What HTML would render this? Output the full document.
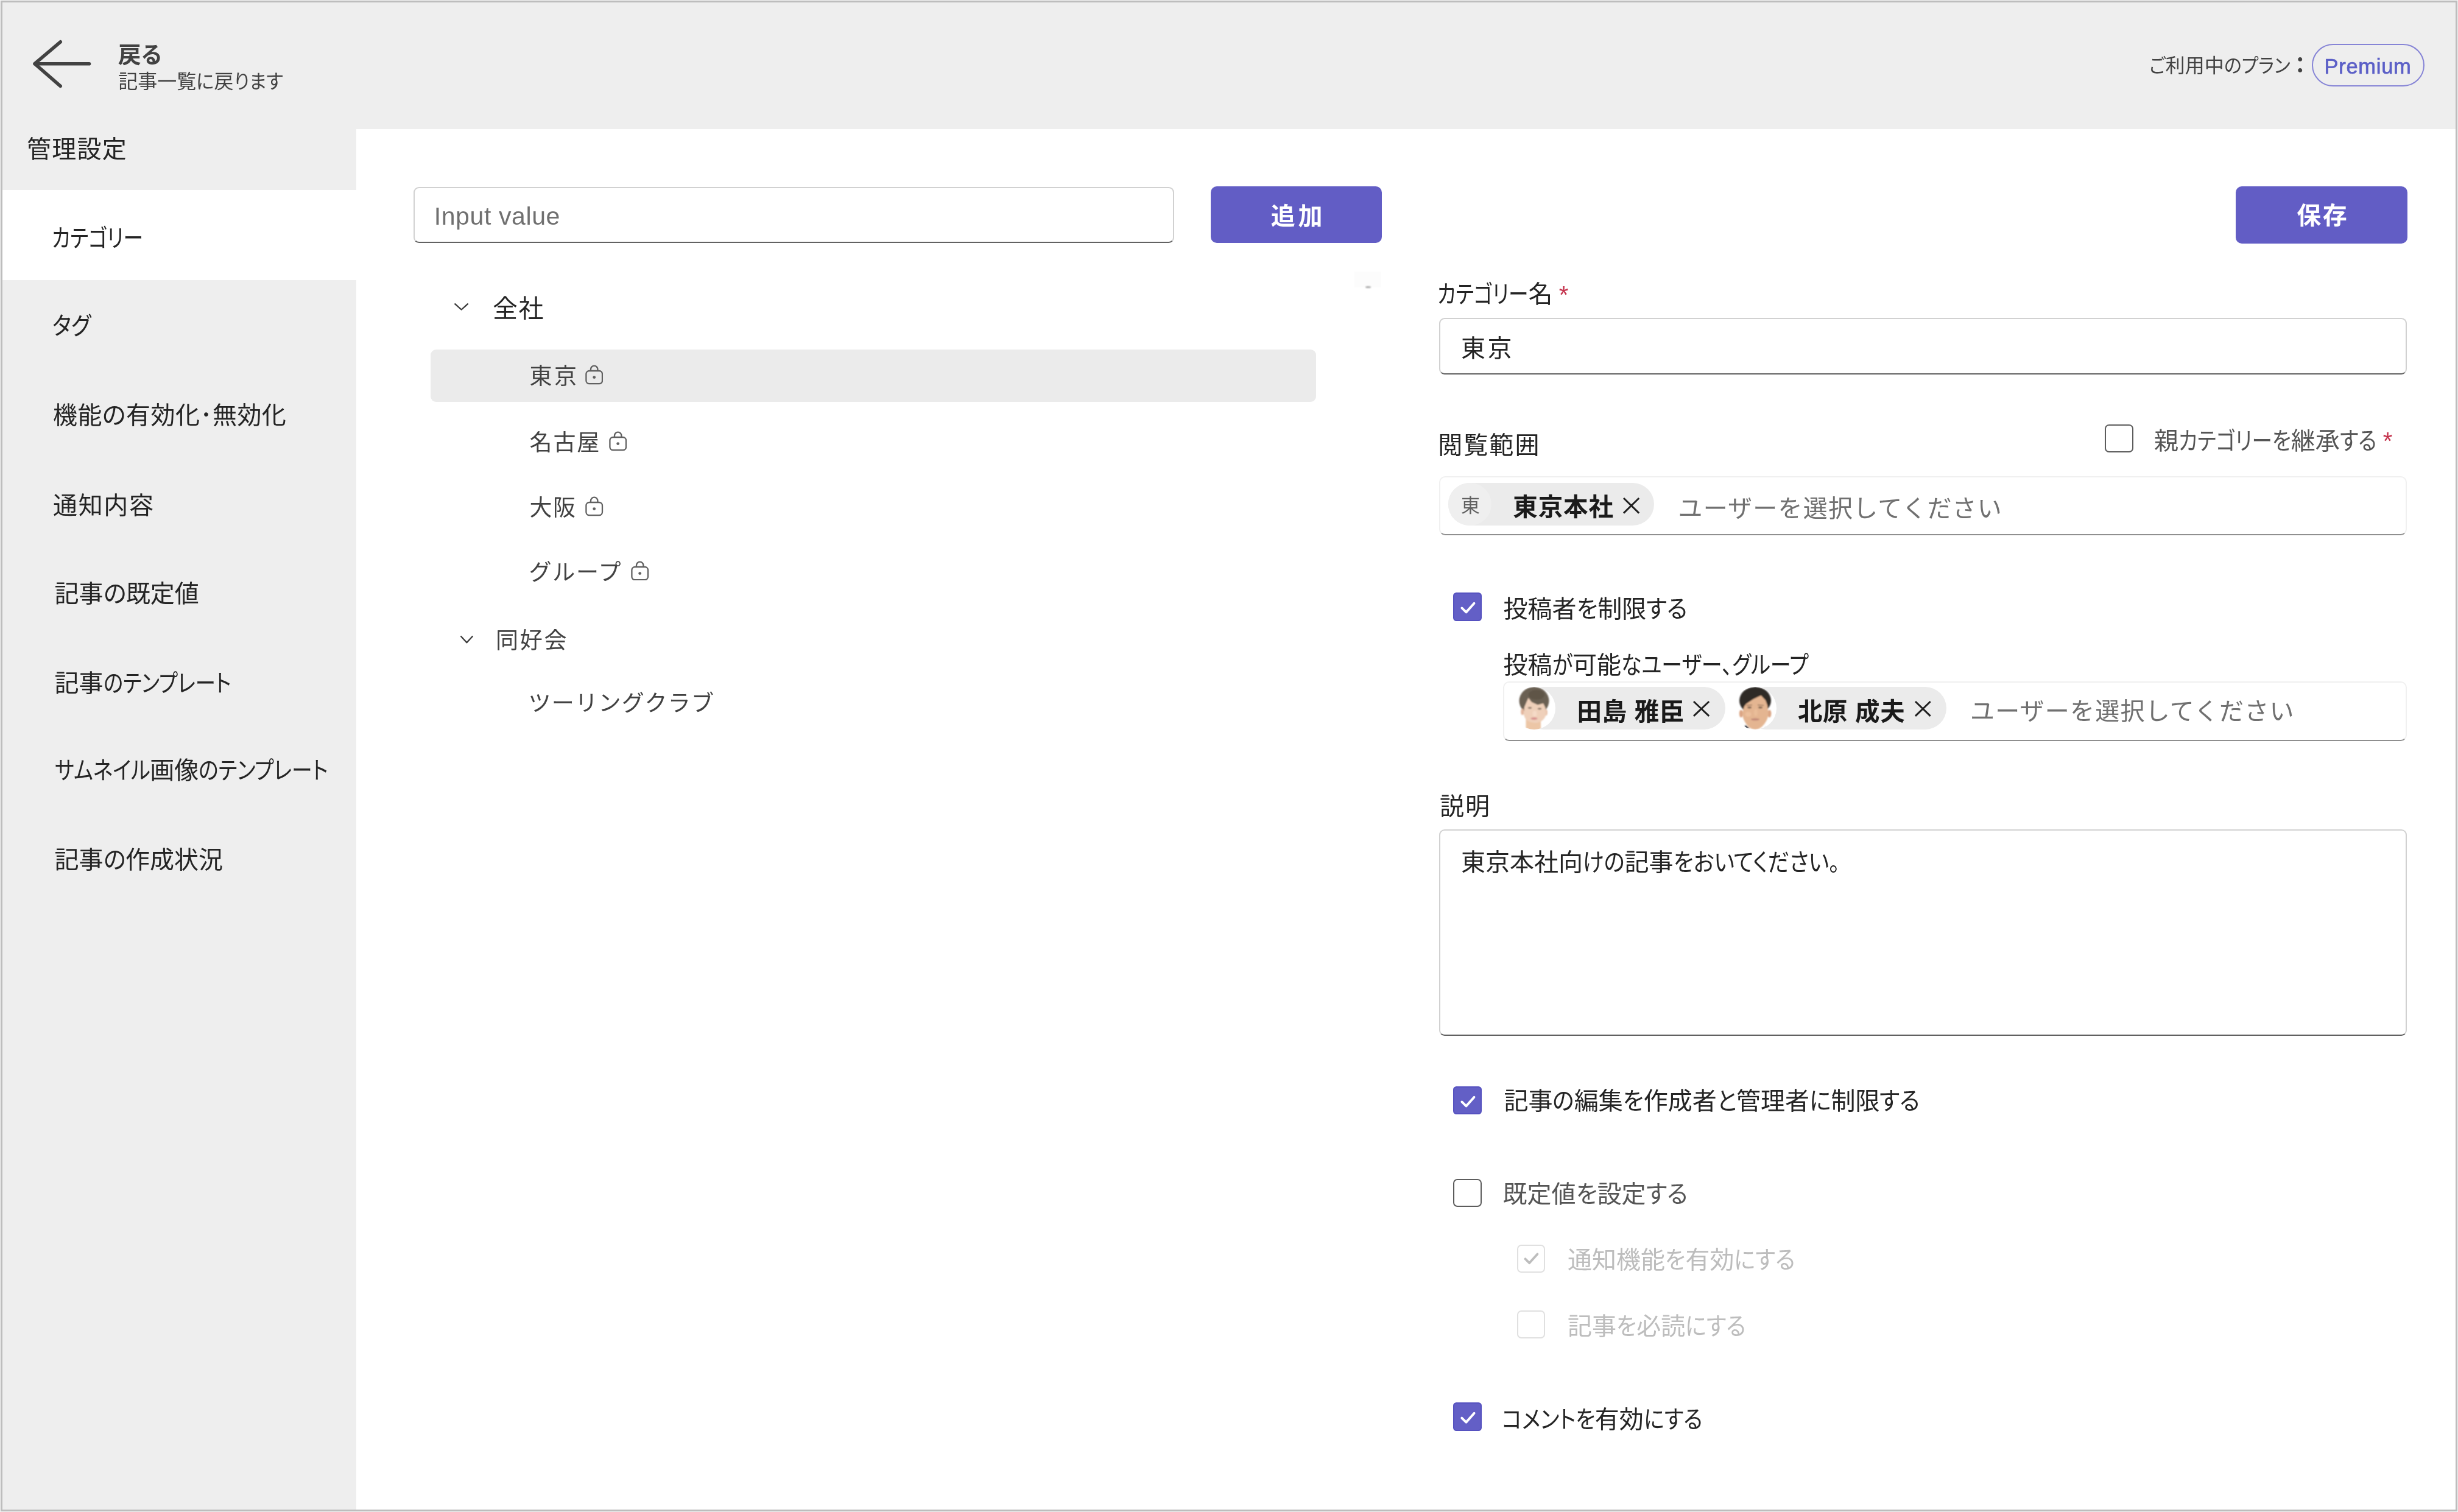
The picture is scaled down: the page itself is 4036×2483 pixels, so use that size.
<!DOCTYPE html>
<html lang="ja"><head><meta charset="utf-8"><title>管理設定</title>
<style>html,body{margin:0;padding:0;background:#f4f4f4}body{width:4036px;height:2483px;overflow:hidden;font-family:"Liberation Sans","Noto Sans CJK JP",sans-serif;}#page{position:relative;width:4036px;height:2483px;overflow:hidden;background:#f4f4f4;filter:blur(0.6px)}</style></head>
<body>
<div id="page">
<div style="position:absolute;left:4.0px;top:4.0px;width:4028.0px;height:208.0px;box-sizing:border-box;background:#eeeeee;"></div>
<div style="position:absolute;left:4.0px;top:212.0px;width:580.5px;height:2267.0px;box-sizing:border-box;background:#eeeeee;"></div>
<div style="position:absolute;left:584.5px;top:212.0px;width:3447.5px;height:2267.0px;box-sizing:border-box;background:#ffffff;"></div>
<div style="position:absolute;left:4.0px;top:312.0px;width:580.5px;height:148.3px;box-sizing:border-box;background:#ffffff;"></div>
<svg style="position:absolute;left:50.0px;top:60.0px" width="104.0" height="90.0" viewBox="0 0 104.00 90.00"><path d="M96.5 44.7 H7 M49.2 8.8 L7 44.7 L49.2 81.4" fill="none" stroke="#424242" stroke-width="5.6" stroke-linecap="round" stroke-linejoin="round"/></svg>
<div style="position:absolute;left:3796.0px;top:72.3px;width:185.0px;height:69.7px;box-sizing:border-box;border:2.6px solid #8684d6;border-radius:36px;"></div>
<div style="position:absolute;left:679.0px;top:307.0px;width:1249.0px;height:92.3px;box-sizing:border-box;background:#fff;border:2.2px solid #d1d1d1;border-bottom:2.6px solid #616161;border-radius:9px;"></div>
<div style="position:absolute;left:1987.6px;top:306.3px;width:281.1px;height:93.2px;box-sizing:border-box;background:#625dc5;border-radius:10px;"></div>
<div style="position:absolute;left:3671.0px;top:305.5px;width:281.6px;height:94.0px;box-sizing:border-box;background:#625dc5;border-radius:10px;"></div>
<div style="position:absolute;left:2224.0px;top:446.3px;width:44.3px;height:25.8px;box-sizing:border-box;background:#fcfcfc;"></div>
<div style="position:absolute;left:2241.5px;top:469.6px;width:9.0px;height:3.0px;box-sizing:border-box;background:#a8a8a8;border-radius:50%;filter:blur(0.8px);"></div>
<svg style="position:absolute;left:744.4px;top:496.3px" width="27.2" height="16.5" viewBox="0 0 27.20 16.50"><path d="M3.2 3.2 L13.6 12.5 L24.0 3.2" stroke="#3a3a3a" stroke-width="2.3" stroke-linecap="round" stroke-linejoin="round" fill="none"/></svg>
<div style="position:absolute;left:707.0px;top:573.5px;width:1453.6px;height:86.0px;box-sizing:border-box;background:#ebebeb;border-radius:9px;"></div>
<svg style="position:absolute;left:960.7px;top:599.4px" width="29.5" height="32.6" viewBox="0 0 29.50 32.60"><rect x="1.4" y="10" width="26.6" height="21.2" rx="5.2" fill="none" stroke="#616161" stroke-width="2.3"/><path d="M9 10 V7.4 a5.7 5.7 0 0 1 11.4 0 V10" fill="none" stroke="#616161" stroke-width="2.3"/><circle cx="14.7" cy="20.6" r="2.4" fill="#616161"/></svg>
<svg style="position:absolute;left:999.8px;top:708.0px" width="29.5" height="32.6" viewBox="0 0 29.50 32.60"><rect x="1.4" y="10" width="26.6" height="21.2" rx="5.2" fill="none" stroke="#616161" stroke-width="2.3"/><path d="M9 10 V7.4 a5.7 5.7 0 0 1 11.4 0 V10" fill="none" stroke="#616161" stroke-width="2.3"/><circle cx="14.7" cy="20.6" r="2.4" fill="#616161"/></svg>
<svg style="position:absolute;left:961.0px;top:815.0px" width="29.5" height="32.6" viewBox="0 0 29.50 32.60"><rect x="1.4" y="10" width="26.6" height="21.2" rx="5.2" fill="none" stroke="#616161" stroke-width="2.3"/><path d="M9 10 V7.4 a5.7 5.7 0 0 1 11.4 0 V10" fill="none" stroke="#616161" stroke-width="2.3"/><circle cx="14.7" cy="20.6" r="2.4" fill="#616161"/></svg>
<svg style="position:absolute;left:1036.0px;top:920.8px" width="29.5" height="32.6" viewBox="0 0 29.50 32.60"><rect x="1.4" y="10" width="26.6" height="21.2" rx="5.2" fill="none" stroke="#616161" stroke-width="2.3"/><path d="M9 10 V7.4 a5.7 5.7 0 0 1 11.4 0 V10" fill="none" stroke="#616161" stroke-width="2.3"/><circle cx="14.7" cy="20.6" r="2.4" fill="#616161"/></svg>
<svg style="position:absolute;left:754.4px;top:1042.2px" width="24.8" height="17.3" viewBox="0 0 24.80 17.30"><path d="M3.2 3.2 L12.4 13.3 L21.6 3.2" stroke="#3a3a3a" stroke-width="2.3" stroke-linecap="round" stroke-linejoin="round" fill="none"/></svg>
<div style="position:absolute;left:2363.0px;top:521.9px;width:1589.0px;height:92.7px;box-sizing:border-box;background:#fff;border:2.2px solid #d1d1d1;border-bottom:2.6px solid #616161;border-radius:9px;"></div>
<div style="position:absolute;left:3456.4px;top:697.0px;width:46.3px;height:46.3px;box-sizing:border-box;background:#fff;border:2.6px solid #5c5c5c;border-radius:7px;"></div>
<div style="position:absolute;left:2363.0px;top:781.5px;width:1589.2px;height:97.3px;box-sizing:border-box;background:#fff;border:2.6px solid #f0f0f0;border-bottom:2.8px solid #8f8f8f;border-radius:10px;"></div>
<div style="position:absolute;left:2378.0px;top:793.3px;width:338.0px;height:69.7px;box-sizing:border-box;background:#ebebeb;border-radius:35px;"></div>
<div style="position:absolute;left:2378.0px;top:793.3px;width:70.5px;height:69.7px;box-sizing:border-box;background:#efefef;border-radius:35px;"></div>
<svg style="position:absolute;left:2664.2px;top:815.5px" width="29.2" height="28.6" viewBox="0 0 29.20 28.60"><path d="M2 2 L27.2 26.6 M27.2 2 L2 26.6" stroke="#1f1f1f" stroke-width="2.9" stroke-linecap="butt" fill="none"/></svg>
<div style="position:absolute;left:2385.6px;top:973.3px;width:47.0px;height:46.7px;box-sizing:border-box;background:#635fc6;border:2px solid #5652c0;border-radius:5.5px;"></div><svg style="position:absolute;left:2385.6px;top:973.3px" width="47.0" height="46.7" viewBox="0 0 47 47"><path d="M14.3 25.6 L21.4 32.6 L34.6 17.8" fill="none" stroke="#fff" stroke-width="3.9" stroke-linecap="round" stroke-linejoin="round"/></svg>
<div style="position:absolute;left:2467.8px;top:1118.7px;width:1484.6px;height:98.2px;box-sizing:border-box;background:#fff;border:2.6px solid #f0f0f0;border-bottom:2.8px solid #8f8f8f;border-radius:10px;"></div>
<div style="position:absolute;left:2500.0px;top:1128.0px;width:332.7px;height:70.0px;box-sizing:border-box;background:#ebebeb;border-radius:35px;"></div>
<svg style="position:absolute;left:2484.1px;top:1127.8px" width="70.0" height="70.0" viewBox="0 0 70 70"><defs><clipPath id="av1"><circle cx="35" cy="35" r="35"/></clipPath><filter id="bl1" x="-10%" y="-10%" width="120%" height="120%"><feGaussianBlur stdDeviation="1.1"/></filter></defs><g clip-path="url(#av1)"><rect width="70" height="70" fill="#ffffff"/><g filter="url(#bl1)"><ellipse cx="35" cy="23" rx="24.5" ry="23" fill="#6a6053"/><rect x="21.5" y="50" width="24.5" height="24" fill="#ecc6a6"/><ellipse cx="15.8" cy="41" rx="2.6" ry="5.2" fill="#e3b59c"/><ellipse cx="54.6" cy="42" rx="2.4" ry="5" fill="#e9c3ab"/><path d="M18 44 L19 33 L25.5 18 L31 25 L41 29.5 L50 27 L53.5 34 L54.5 44 Q54 52 46 57 Q35 62 25 56 Q18 51 18 44 Z" fill="#efd0ba"/><ellipse cx="39" cy="13" rx="13" ry="8" fill="#544a3e" opacity=".55"/><ellipse cx="28" cy="34.5" rx="3.2" ry="1.4" fill="#6b5a4c" opacity=".75"/><ellipse cx="44" cy="36" rx="3.2" ry="1.4" fill="#6b5a4c" opacity=".75"/><ellipse cx="35" cy="52" rx="5.6" ry="1.9" fill="#d8908e"/><ellipse cx="36" cy="44" rx="3.5" ry="5" fill="#f6dccb" opacity=".8"/></g></g></svg>
<svg style="position:absolute;left:2779.0px;top:1149.9px" width="29.2" height="27.9" viewBox="0 0 29.20 27.90"><path d="M2 2 L27.2 25.9 M27.2 2 L2 25.9" stroke="#1f1f1f" stroke-width="2.9" stroke-linecap="butt" fill="none"/></svg>
<div style="position:absolute;left:2865.0px;top:1128.0px;width:331.2px;height:70.0px;box-sizing:border-box;background:#ebebeb;border-radius:35px;"></div>
<svg style="position:absolute;left:2846.9px;top:1127.8px" width="70.0" height="70.0" viewBox="0 0 70 70"><defs><clipPath id="av2"><circle cx="35" cy="35" r="35"/></clipPath><filter id="bl2" x="-10%" y="-10%" width="120%" height="120%"><feGaussianBlur stdDeviation="1.1"/></filter></defs><g clip-path="url(#av2)"><rect width="70" height="70" fill="#ffffff"/><g filter="url(#bl2)"><ellipse cx="35" cy="22.5" rx="26" ry="22.5" fill="#2f2b28"/><ellipse cx="11.8" cy="44" rx="3" ry="6.2" fill="#dba483"/><ellipse cx="58.4" cy="44" rx="3" ry="6.2" fill="#dba483"/><path d="M14 42 L17 32 L20 28 L32 20 L44.5 14 L52 22 L55 30 L56.5 42 Q57 52 50 61 Q43 70 35 70 Q27 70 21 62 Q13.5 52 14 42 Z" fill="#e4b591"/><path d="M16 72 L19 62.5 L24.5 67 L25 72 Z" fill="#1f2535"/><path d="M47 72 L52.5 64 L57 72 Z" fill="#d9dde6"/><ellipse cx="25.6" cy="34" rx="3.5" ry="1.4" fill="#5d4a3c" opacity=".85"/><ellipse cx="43.5" cy="34" rx="3.5" ry="1.4" fill="#5d4a3c" opacity=".85"/><path d="M20.5 30.5 L30 29.5 M39 29.5 L49 30.5" stroke="#6a5040" stroke-width="1.3" opacity=".6"/><ellipse cx="35" cy="53.3" rx="7" ry="1.9" fill="#c48a79"/><ellipse cx="23.5" cy="45" rx="5" ry="4" fill="#f0c5a2" opacity=".7"/><ellipse cx="36" cy="42" rx="3" ry="6" fill="#ecc09d" opacity=".7"/></g></g></svg>
<svg style="position:absolute;left:3142.5px;top:1149.9px" width="28.7" height="27.9" viewBox="0 0 28.70 27.90"><path d="M2 2 L26.7 25.9 M26.7 2 L2 25.9" stroke="#1f1f1f" stroke-width="2.9" stroke-linecap="butt" fill="none"/></svg>
<div style="position:absolute;left:2363.0px;top:1362.2px;width:1589.0px;height:338.6px;box-sizing:border-box;background:#fff;border:2.2px solid #d1d1d1;border-bottom:2.6px solid #616161;border-radius:9px;"></div>
<div style="position:absolute;left:2385.6px;top:1783.7px;width:47.0px;height:46.7px;box-sizing:border-box;background:#635fc6;border:2px solid #5652c0;border-radius:5.5px;"></div><svg style="position:absolute;left:2385.6px;top:1783.7px" width="47.0" height="46.7" viewBox="0 0 47 47"><path d="M14.3 25.6 L21.4 32.6 L34.6 17.8" fill="none" stroke="#fff" stroke-width="3.9" stroke-linecap="round" stroke-linejoin="round"/></svg>
<div style="position:absolute;left:2385.6px;top:1936.0px;width:47.0px;height:46.2px;box-sizing:border-box;background:#fff;border:2.6px solid #5c5c5c;border-radius:7px;"></div>
<div style="position:absolute;left:2491.0px;top:2044.0px;width:46.4px;height:45.6px;box-sizing:border-box;background:#fff;border:2.4px solid #e0e0e0;border-radius:7px;"></div><svg style="position:absolute;left:2491.0px;top:2044.0px" width="46.4" height="45.6" viewBox="0 0 47 47"><path d="M13.5 24 L20.5 31 L34 16" fill="none" stroke="#bdbdbd" stroke-width="4" stroke-linecap="round" stroke-linejoin="round"/></svg>
<div style="position:absolute;left:2491.0px;top:2151.5px;width:46.4px;height:46.3px;box-sizing:border-box;background:#fff;border:2.4px solid #e0e0e0;border-radius:7px;"></div>
<div style="position:absolute;left:2385.6px;top:2303.0px;width:47.0px;height:47.0px;box-sizing:border-box;background:#635fc6;border:2px solid #5652c0;border-radius:5.5px;"></div><svg style="position:absolute;left:2385.6px;top:2303.0px" width="47.0" height="47.0" viewBox="0 0 47 47"><path d="M14.3 25.6 L21.4 32.6 L34.6 17.8" fill="none" stroke="#fff" stroke-width="3.9" stroke-linecap="round" stroke-linejoin="round"/></svg>
<div style="position:absolute;left:193.8px;top:29.6px;height:120px;line-height:120px;white-space:pre;font-size:38px;font-weight:700;color:#424242;font-feature-settings:'palt';">戻<span style="display:inline-block;transform:scaleX(0.9486);transform-origin:0 50%;margin-right:-1.80px">る</span></div>
<div style="position:absolute;left:194.2px;top:73.6px;height:120px;line-height:120px;white-space:pre;font-size:32px;font-weight:400;color:#424242;font-feature-settings:'palt';">記事一覧<span style="display:inline-block;transform:scaleX(0.9500);transform-origin:0 50%;margin-right:-1.54px">に</span>戻<span style="display:inline-block;transform:scaleX(0.9500);transform-origin:0 50%;margin-right:-4.26px">ります</span></div>
<div style="position:absolute;left:3529.3px;top:47.5px;height:120px;line-height:120px;white-space:pre;font-size:32px;font-weight:400;color:#424242;font-feature-settings:'palt';"><span style="display:inline-block;transform:scaleX(0.9336);transform-origin:0 50%;margin-right:-1.87px">ご</span>利用中<span style="display:inline-block;transform:scaleX(0.9336);transform-origin:0 50%;margin-right:-7.73px">のプラン</span></div>
<div style="position:absolute;left:3758.7px;top:48.3px;height:120px;line-height:120px;white-space:pre;font-size:36px;font-weight:700;color:#424242;">：</div>
<div style="position:absolute;left:3816.5px;top:49.1px;height:120px;line-height:120px;white-space:pre;font-size:34.5px;font-weight:400;color:#5b5fc7;letter-spacing:0.717px;-webkit-text-stroke:0.7px #5b5fc7;">Premium</div>
<div style="position:absolute;left:43.9px;top:184.5px;height:120px;line-height:120px;white-space:pre;font-size:40px;font-weight:400;color:#242424;font-feature-settings:'palt';letter-spacing:1.300px;">管理設定</div>
<div style="position:absolute;left:85.2px;top:330.5px;height:120px;line-height:120px;white-space:pre;font-size:40px;font-weight:400;color:#242424;font-feature-settings:'palt';"><span style="display:inline-block;transform:scaleX(0.8196);transform-origin:0 50%;margin-right:-33.00px">カテゴリー</span></div>
<div style="position:absolute;left:86.0px;top:475.0px;height:120px;line-height:120px;white-space:pre;font-size:40px;font-weight:400;color:#242424;font-feature-settings:'palt';"><span style="display:inline-block;transform:scaleX(0.8876);transform-origin:0 50%;margin-right:-8.00px">タグ</span></div>
<div style="position:absolute;left:87.0px;top:621.5px;height:120px;line-height:120px;white-space:pre;font-size:40px;font-weight:400;color:#242424;font-feature-settings:'palt';letter-spacing:0.478px;">機能の有効化･無効化</div>
<div style="position:absolute;left:87.0px;top:769.8px;height:120px;line-height:120px;white-space:pre;font-size:40px;font-weight:400;color:#242424;font-feature-settings:'palt';letter-spacing:1.667px;">通知内容</div>
<div style="position:absolute;left:89.5px;top:915.2px;height:120px;line-height:120px;white-space:pre;font-size:40px;font-weight:400;color:#242424;font-feature-settings:'palt';">記事<span style="display:inline-block;transform:scaleX(0.9689);transform-origin:0 50%;margin-right:-1.20px">の</span>既定値</div>
<div style="position:absolute;left:89.5px;top:1062.0px;height:120px;line-height:120px;white-space:pre;font-size:40px;font-weight:400;color:#242424;font-feature-settings:'palt';">記事<span style="display:inline-block;transform:scaleX(0.8330);transform-origin:0 50%;margin-right:-42.00px">のテンプレート</span></div>
<div style="position:absolute;left:89.5px;top:1205.3px;height:120px;line-height:120px;white-space:pre;font-size:40px;font-weight:400;color:#242424;font-feature-settings:'palt';"><span style="display:inline-block;transform:scaleX(0.8453);transform-origin:0 50%;margin-right:-28.69px">サムネイル</span>画像<span style="display:inline-block;transform:scaleX(0.8453);transform-origin:0 50%;margin-right:-38.91px">のテンプレート</span></div>
<div style="position:absolute;left:89.5px;top:1351.7px;height:120px;line-height:120px;white-space:pre;font-size:40px;font-weight:400;color:#242424;font-feature-settings:'palt';">記事<span style="display:inline-block;transform:scaleX(0.9481);transform-origin:0 50%;margin-right:-2.00px">の</span>作成状況</div>
<div style="position:absolute;left:712.7px;top:295.4px;height:120px;line-height:120px;white-space:pre;font-size:41px;font-weight:400;color:#707070;letter-spacing:0.610px;">Input value</div>
<div style="position:absolute;left:2086.8px;top:294.9px;height:120px;line-height:120px;white-space:pre;font-size:40px;font-weight:700;color:#ffffff;letter-spacing:4.700px;">追加</div>
<div style="position:absolute;left:3771.3px;top:294.4px;height:120px;line-height:120px;white-space:pre;font-size:40px;font-weight:700;color:#ffffff;letter-spacing:2.400px;">保存</div>
<div style="position:absolute;left:809.0px;top:446.7px;height:120px;line-height:120px;white-space:pre;font-size:41px;font-weight:400;color:#242424;letter-spacing:1.500px;">全社</div>
<div style="position:absolute;left:869.4px;top:559.2px;height:120px;line-height:120px;white-space:pre;font-size:37px;font-weight:400;color:#424242;letter-spacing:3.600px;">東京</div>
<div style="position:absolute;left:869.5px;top:668.1px;height:120px;line-height:120px;white-space:pre;font-size:37px;font-weight:400;color:#424242;letter-spacing:1.900px;">名古屋</div>
<div style="position:absolute;left:869.5px;top:775.1px;height:120px;line-height:120px;white-space:pre;font-size:37px;font-weight:400;color:#424242;letter-spacing:1.500px;">大阪</div>
<div style="position:absolute;left:868.5px;top:881.4px;height:120px;line-height:120px;white-space:pre;font-size:37px;font-weight:400;color:#424242;letter-spacing:1.700px;">グループ</div>
<div style="position:absolute;left:814.0px;top:993.3px;height:120px;line-height:120px;white-space:pre;font-size:37px;font-weight:400;color:#424242;letter-spacing:2.700px;">同好会</div>
<div style="position:absolute;left:867.5px;top:1096.4px;height:120px;line-height:120px;white-space:pre;font-size:37px;font-weight:400;color:#424242;letter-spacing:1.329px;">ツーリングクラブ</div>
<div style="position:absolute;left:2360.0px;top:422.5px;height:120px;line-height:120px;white-space:pre;font-size:40px;font-weight:400;color:#242424;font-feature-settings:'palt';"><span style="display:inline-block;transform:scaleX(0.8174);transform-origin:0 50%;margin-right:-33.40px">カテゴリー</span>名</div>
<div style="position:absolute;left:2559.7px;top:423.6px;height:120px;line-height:120px;white-space:pre;font-size:40px;font-weight:400;color:#c4314b;">*</div>
<div style="position:absolute;left:2399.0px;top:511.9px;height:120px;line-height:120px;white-space:pre;font-size:40px;font-weight:400;color:#242424;letter-spacing:3.400px;">東京</div>
<div style="position:absolute;left:2361.2px;top:671.4px;height:120px;line-height:120px;white-space:pre;font-size:40px;font-weight:400;color:#242424;font-feature-settings:'palt';letter-spacing:2.067px;">閲覧範囲</div>
<div style="position:absolute;left:3536.9px;top:663.5px;height:120px;line-height:120px;white-space:pre;font-size:40px;font-weight:400;color:#555555;font-feature-settings:'palt';">親<span style="display:inline-block;transform:scaleX(0.8410);transform-origin:0 50%;margin-right:-34.95px">カテゴリーを</span>継承<span style="display:inline-block;transform:scaleX(0.8410);transform-origin:0 50%;margin-right:-11.45px">する</span></div>
<div style="position:absolute;left:3912.8px;top:664.4px;height:120px;line-height:120px;white-space:pre;font-size:40px;font-weight:400;color:#c4314b;">*</div>
<div style="position:absolute;left:2399.0px;top:771.1px;height:120px;line-height:120px;white-space:pre;font-size:31px;font-weight:400;color:#616161;">東</div>
<div style="position:absolute;left:2484.3px;top:773.4px;height:120px;line-height:120px;white-space:pre;font-size:40.5px;font-weight:700;color:#1a1a1a;letter-spacing:0.900px;">東京本社</div>
<div style="position:absolute;left:2755.5px;top:775.0px;height:120px;line-height:120px;white-space:pre;font-size:40px;font-weight:400;color:#707070;letter-spacing:1.208px;">ユーザーを選択してください</div>
<div style="position:absolute;left:2468.6px;top:939.9px;height:120px;line-height:120px;white-space:pre;font-size:40px;font-weight:400;color:#242424;font-feature-settings:'palt';">投稿者<span style="display:inline-block;transform:scaleX(0.9394);transform-origin:0 50%;margin-right:-2.24px">を</span>制限<span style="display:inline-block;transform:scaleX(0.9394);transform-origin:0 50%;margin-right:-4.36px">する</span></div>
<div style="position:absolute;left:2468.6px;top:1031.5px;height:120px;line-height:120px;white-space:pre;font-size:40px;font-weight:400;color:#242424;font-feature-settings:'palt';">投稿<span style="display:inline-block;transform:scaleX(0.8504);transform-origin:0 50%;margin-right:-5.86px">が</span>可能<span style="display:inline-block;transform:scaleX(0.8504);transform-origin:0 50%;margin-right:-54.14px">なユーザー、グループ</span></div>
<div style="position:absolute;left:2589.6px;top:1108.5px;height:120px;line-height:120px;white-space:pre;font-size:40.5px;font-weight:700;color:#1a1a1a;letter-spacing:0.600px;">田島 雅臣</div>
<div style="position:absolute;left:2951.9px;top:1108.5px;height:120px;line-height:120px;white-space:pre;font-size:40.5px;font-weight:700;color:#1a1a1a;letter-spacing:0.650px;">北原 成夫</div>
<div style="position:absolute;left:3234.9px;top:1108.4px;height:120px;line-height:120px;white-space:pre;font-size:40px;font-weight:400;color:#707070;letter-spacing:1.242px;">ユーザーを選択してください</div>
<div style="position:absolute;left:2364.0px;top:1264.2px;height:120px;line-height:120px;white-space:pre;font-size:40px;font-weight:400;color:#242424;font-feature-settings:'palt';letter-spacing:2.000px;">説明</div>
<div style="position:absolute;left:2399.0px;top:1355.8px;height:120px;line-height:120px;white-space:pre;font-size:40px;font-weight:400;color:#242424;font-feature-settings:'palt';">東京本社向<span style="display:inline-block;transform:scaleX(0.8836);transform-origin:0 50%;margin-right:-9.04px">けの</span>記事<span style="display:inline-block;transform:scaleX(0.8836);transform-origin:0 50%;margin-right:-35.96px">をおいてください。</span></div>
<div style="position:absolute;left:2469.4px;top:1748.0px;height:120px;line-height:120px;white-space:pre;font-size:40px;font-weight:400;color:#242424;font-feature-settings:'palt';">記事<span style="display:inline-block;transform:scaleX(0.9178);transform-origin:0 50%;margin-right:-3.17px">の</span>編集<span style="display:inline-block;transform:scaleX(0.9178);transform-origin:0 50%;margin-right:-3.04px">を</span>作成者<span style="display:inline-block;transform:scaleX(0.9178);transform-origin:0 50%;margin-right:-2.90px">と</span>管理者<span style="display:inline-block;transform:scaleX(0.9178);transform-origin:0 50%;margin-right:-3.17px">に</span>制限<span style="display:inline-block;transform:scaleX(0.9178);transform-origin:0 50%;margin-right:-5.92px">する</span></div>
<div style="position:absolute;left:2467.6px;top:1901.0px;height:120px;line-height:120px;white-space:pre;font-size:40px;font-weight:400;color:#555555;font-feature-settings:'palt';">既定値<span style="display:inline-block;transform:scaleX(0.9486);transform-origin:0 50%;margin-right:-1.90px">を</span>設定<span style="display:inline-block;transform:scaleX(0.9486);transform-origin:0 50%;margin-right:-3.70px">する</span></div>
<div style="position:absolute;left:2574.0px;top:2009.0px;height:120px;line-height:120px;white-space:pre;font-size:40px;font-weight:400;color:#bdbdbd;font-feature-settings:'palt';">通知機能<span style="display:inline-block;transform:scaleX(0.9067);transform-origin:0 50%;margin-right:-3.45px">を</span>有効<span style="display:inline-block;transform:scaleX(0.9067);transform-origin:0 50%;margin-right:-10.35px">にする</span></div>
<div style="position:absolute;left:2574.0px;top:2118.4px;height:120px;line-height:120px;white-space:pre;font-size:40px;font-weight:400;color:#bdbdbd;font-feature-settings:'palt';">記事<span style="display:inline-block;transform:scaleX(0.8986);transform-origin:0 50%;margin-right:-3.74px">を</span>必読<span style="display:inline-block;transform:scaleX(0.8986);transform-origin:0 50%;margin-right:-11.26px">にする</span></div>
<div style="position:absolute;left:2465.6px;top:2270.6px;height:120px;line-height:120px;white-space:pre;font-size:40px;font-weight:400;color:#242424;font-feature-settings:'palt';"><span style="display:inline-block;transform:scaleX(0.8698);transform-origin:0 50%;margin-right:-22.95px">コメントを</span>有効<span style="display:inline-block;transform:scaleX(0.8698);transform-origin:0 50%;margin-right:-14.45px">にする</span></div>
<div style="position:absolute;left:1.0px;top:1.0px;width:4034.0px;height:2481.0px;box-sizing:border-box;border:3px solid #bdbdbd;"></div>
</div>
</body></html>
